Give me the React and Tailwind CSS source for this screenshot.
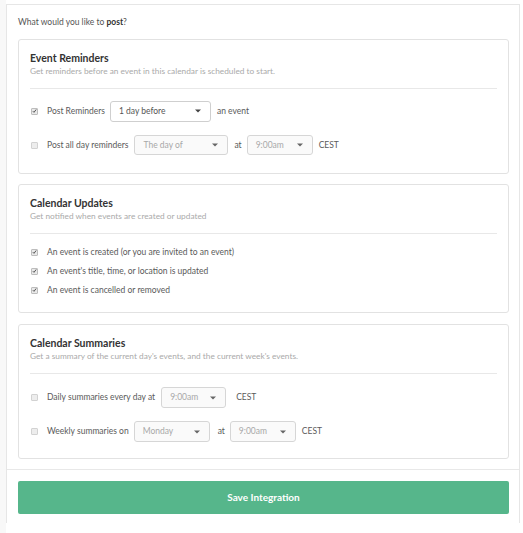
import React from "react";

const font = { fontFamily: "Lato, 'Open Sans', sans-serif" };

function Caret({ muted }) {
  return (
    <svg width="6" height="4" viewBox="0 0 6 4" className="shrink-0">
      <path d="M0 0.5 L6 0.5 L3 3.5 Z" fill={muted ? "#666" : "#444"} />
    </svg>
  );
}

function Select({ value, width, disabled, height = "h-[20px]" }) {
  return (
    <div
      className={`${width} ${height} flex items-center justify-between rounded-[3px] border pl-[8px] pr-[9px] text-[8.5px] ${
        disabled
          ? "border-[#d6d6d6] bg-[#fafafa] text-[#a8a8a8]"
          : "border-[#cfcfcf] bg-white text-[#555]"
      }`}
    >
      <span>{value}</span>
      <Caret muted={disabled} />
    </div>
  );
}

function Checkbox({ checked }) {
  return (
    <span
      className={`ml-[1px] flex h-[7px] w-[7px] shrink-0 items-center justify-center rounded-[1px] border ${
        checked ? "border-[#bdbdbd] bg-[#e9e9e9]" : "border-[#d2d2d2] bg-[#ededed]"
      }`}
    >
      {checked && (
        <svg width="6" height="6" viewBox="0 0 6 6">
          <path d="M1 3.2 L2.4 4.6 L5 1.2" stroke="#444" strokeWidth="1.1" fill="none" />
        </svg>
      )}
    </span>
  );
}

function Card({ title, subtitle, children, bodyClass }) {
  return (
    <section className="w-[491px] rounded-[3px] border border-[#e2e2e2] bg-white px-[11px] pt-[12px]">
      <h2 className="h-[13px] text-[10.5px] font-bold leading-[13px] text-[#333]">{title}</h2>
      <p className="mt-[1px] h-[11px] text-[8.3px] leading-[11px] text-[#aaa]">{subtitle}</p>
      <div className="mt-[11px] border-t border-[#e8e8e8]" />
      <div className={bodyClass}>{children}</div>
    </section>
  );
}

function Row({ checked, children, className = "h-[20px]" }) {
  return (
    <div className={`flex items-center text-[8.5px] text-[#5a5a5a] ${className}`}>
      <Checkbox checked={checked} />
      <div className="ml-[9px] flex items-center">{children}</div>
    </div>
  );
}

export default function App() {
  return (
    <div className="flex h-[533px] w-[523px] bg-white" style={font}>
      <div className="w-[6px] bg-[#f8f8f8]" />
      <div className="mt-[4px] h-[519px] w-[514px] border-x border-t border-[#e6e6e6] bg-white">
        <div className="px-[11px]">
          <p className="mt-[12px] h-[11px] text-[8.5px] leading-[11px] text-[#555]">
            What would you like to <b className="font-bold text-[#333]">post</b>?
          </p>

          <div className="mt-[11px] flex flex-col">
            {/* reminders */}
            <Card
              title="Event Reminders"
              subtitle="Get reminders before an event in this calendar is scheduled to start."
              bodyClass="flex flex-col gap-[14px] pb-[18px] pt-[12px]"
            >
              <Row checked>
                <span>Post Reminders</span>
                <div className="ml-[5px]">
                  <Select value="1 day before" width="w-[101px]" height="h-[21px]" />
                </div>
                <span className="ml-[6px]">an event</span>
              </Row>
              <Row>
                <span>Post all day reminders</span>
                <div className="ml-[6px]">
                  <Select value="The day of" width="w-[94px]" disabled />
                </div>
                <span className="ml-[6px]">at</span>
                <div className="ml-[5px]">
                  <Select value="9:00am" width="w-[66px]" disabled />
                </div>
                <span className="ml-[6px]">CEST</span>
              </Row>
            </Card>

            {/* updates */}
            <div className="mt-[10px]">
              <Card
                title="Calendar Updates"
                subtitle="Get notified when events are created or updated"
                bodyClass="flex flex-col gap-[7px] pb-[16px] pt-[12px]"
              >
                <Row checked className="h-[12px]">
                  <span>An event is created (or you are invited to an event)</span>
                </Row>
                <Row checked className="h-[12px]">
                  <span>An event's title, time, or location is updated</span>
                </Row>
                <Row checked className="h-[12px]">
                  <span>An event is cancelled or removed</span>
                </Row>
              </Card>
            </div>

            {/* summaries */}
            <div className="mt-[11px]">
              <Card
                title="Calendar Summaries"
                subtitle="Get a summary of the current day's events, and the current week's events."
                bodyClass="flex flex-col gap-[13px] pb-[16px] pt-[13px]"
              >
                <Row className="h-[21px]">
                  <span>Daily summaries every day at</span>
                  <div className="ml-[6px]">
                    <Select value="9:00am" width="w-[65px]" height="h-[21px]" disabled />
                  </div>
                  <span className="ml-[10px]">CEST</span>
                </Row>
                <Row className="h-[21px]">
                  <span>Weekly summaries on</span>
                  <div className="ml-[5px]">
                    <Select value="Monday" width="w-[76px]" height="h-[21px]" disabled />
                  </div>
                  <span className="ml-[8px]">at</span>
                  <div className="ml-[5px]">
                    <Select value="9:00am" width="w-[66px]" height="h-[21px]" disabled />
                  </div>
                  <span className="ml-[6px]">CEST</span>
                </Row>
              </Card>
            </div>
          </div>
        </div>

        <div className="mt-[10px] border-t border-[#e8e8e8] px-[11px] pt-[11px]">
          <button className="flex h-[33px] w-[491px] items-center justify-center rounded-[2px] bg-[#56b68b] text-[10px] font-bold text-white">
            Save Integration
          </button>
        </div>
      </div>
    </div>
  );
}
